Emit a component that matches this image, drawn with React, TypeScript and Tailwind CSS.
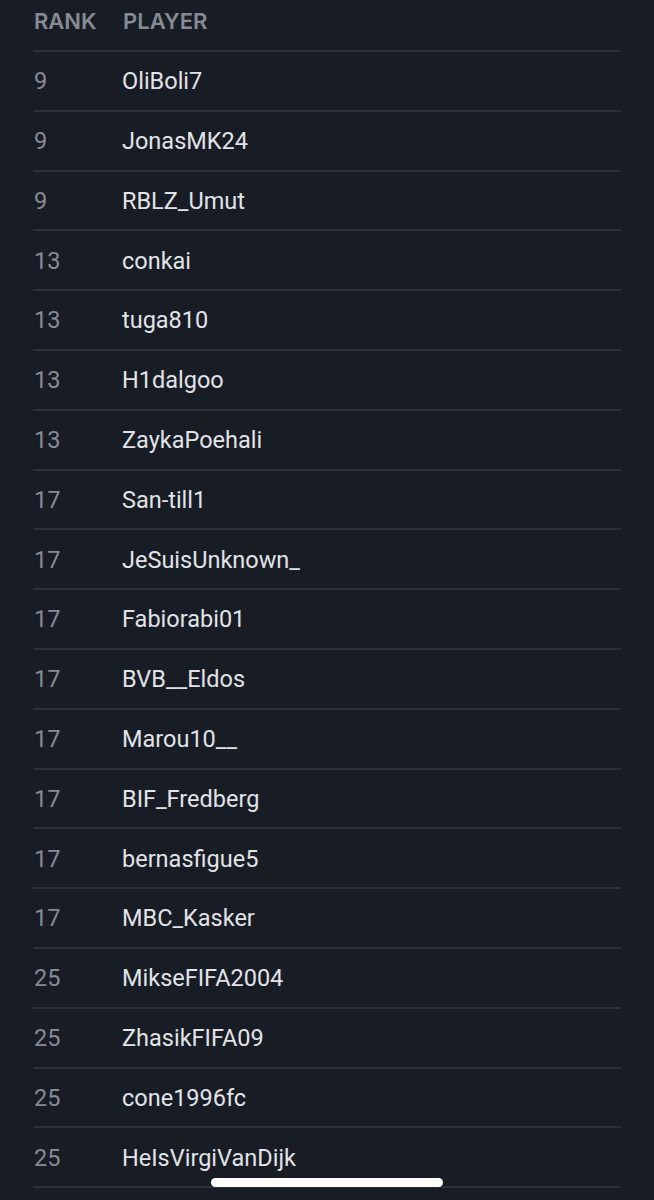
import { FC } from "react";

const rows: [string, string][] = [
  ["9", "OliBoli7"],
  ["9", "JonasMK24"],
  ["9", "RBLZ_Umut"],
  ["13", "conkai"],
  ["13", "tuga810"],
  ["13", "H1dalgoo"],
  ["13", "ZaykaPoehali"],
  ["17", "San-till1"],
  ["17", "JeSuisUnknown_"],
  ["17", "Fabiorabi01"],
  ["17", "BVB__Eldos"],
  ["17", "Marou10__"],
  ["17", "BIF_Fredberg"],
  ["17", "bernasfigue5"],
  ["17", "MBC_Kasker"],
  ["25", "MikseFIFA2004"],
  ["25", "ZhasikFIFA09"],
  ["25", "cone1996fc"],
  ["25", "HeIsVirgiVanDijk"],
];

const Row: FC<{ rank: string; name: string }> = ({ rank, name }) => (
  <div className="flex items-center h-[59.8px] pt-[2px] border-t-2 border-[#2b303a]">
    <span className="w-[89px] pl-[1px] text-[#868b94]">{rank}</span>
    <span className="text-[#e1e3e7]">{name}</span>
  </div>
);

export default function App() {
  return (
    <div className="relative w-[654px] h-[1200px] overflow-hidden bg-[#181c25] font-['Roboto',sans-serif]">
      <div className="ml-[33px] w-[588px] text-[23.5px]">
        <div className="flex items-center h-[50px] pb-[7px] font-['Inter',sans-serif] font-semibold text-[22px] text-[#868b94]">
          <span className="w-[90px] pl-[1px]">RANK</span>
          <span>PLAYER</span>
        </div>
        {rows.map(([rank, name], i) => (
          <Row key={i} rank={rank} name={name} />
        ))}
        <div className="border-t-2 border-[#2b303a]" />
      </div>
      <div className="absolute left-[211px] top-[1178px] w-[232px] h-[9px] rounded-full bg-white" />
    </div>
  );
}
